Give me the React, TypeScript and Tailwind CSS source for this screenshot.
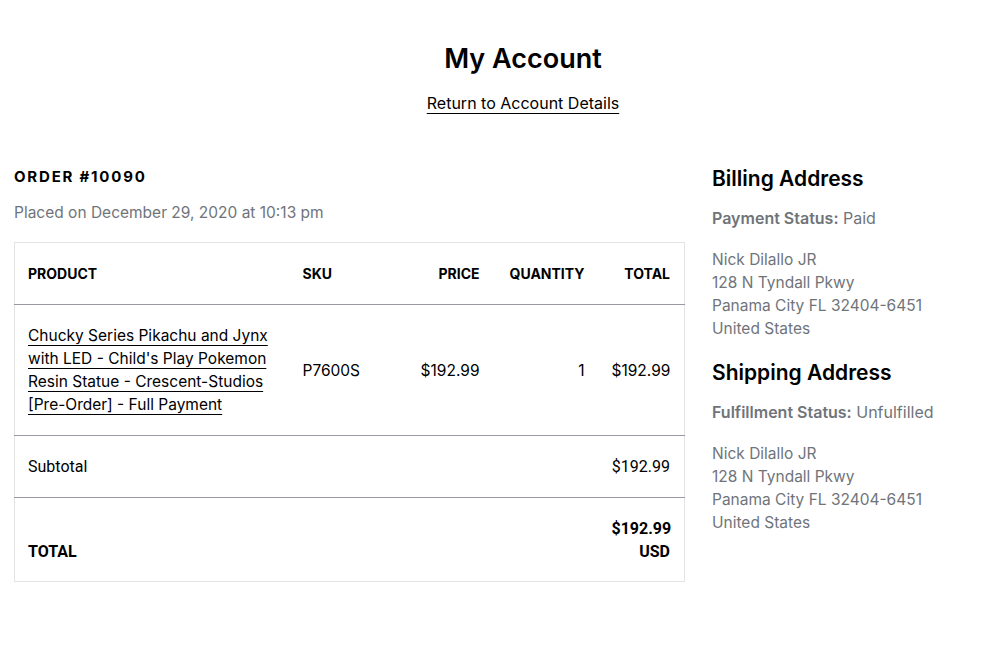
const font = { fontFamily: "Inter, 'Open Sans', sans-serif" };

const lines = ["Nick Dilallo JR", "128 N Tyndall Pkwy", "Panama City FL 32404-6451", "United States"];

function AddressBlock({ title, label, value }: { title: string; label: string; value: string }) {
  return (
    <div>
      <h2 className="text-[21px] font-semibold leading-[24px] text-black">{title}</h2>
      <p className="mt-[16px] text-[16px] leading-[22px] text-[#6f747a]">
        <span className="font-semibold">{label}</span> {value}
      </p>
      <div className="mt-[19px] text-[15.5px] leading-[23px] text-[#6f747a]">
        {lines.map((line) => (
          <div key={line}>{line}</div>
        ))}
      </div>
    </div>
  );
}

export default function App() {
  return (
    <div className="min-h-[648px] bg-white text-black" style={font}>
      <div className="pl-[46px] pt-[42px] text-center">
        <h1 className="text-[27px] font-semibold leading-[34px]">My Account</h1>
        <a href="#" className="mt-[16px] inline-block text-[16px] leading-[22px] underline underline-offset-[4px]">
          Return to Account Details
        </a>
      </div>

      <div className="mt-[52px] flex gap-[28px] px-[14px]">
        <div className="w-[670px] shrink-0">
          <h2 className="-mt-[1px] text-[15px] font-bold leading-[22px] tracking-[0.12em]">ORDER #10090</h2>
          <p className="mt-[14px] text-[15.5px] leading-[22px] text-[#6f747a]">
            Placed on December 29, 2020 at 10:13 pm
          </p>
          <table className="mt-[18px] w-full table-fixed border border-[#e4e4e4] text-[15.5px] leading-[23px]">
            <colgroup>
              <col className="w-[275px]" />
              <col className="w-[100px]" />
              <col className="w-[103px]" />
              <col className="w-[105px]" />
              <col className="w-[87px]" />
            </colgroup>
            <thead>
              <tr className="border-b border-[#979aa0] text-[14px] font-bold">
                <th className="px-[13px] py-[19px] text-left">PRODUCT</th>
                <th className="px-[13px] py-[19px] text-left">SKU</th>
                <th className="px-[13px] py-[19px] text-right">PRICE</th>
                <th className="px-[13px] py-[19px] text-right">QUANTITY</th>
                <th className="px-[14px] py-[19px] text-right">TOTAL</th>
              </tr>
            </thead>
            <tbody>
              <tr className="border-b border-[#979aa0]">
                <td className="px-[13px] py-[19px]">
                  <a href="#" className="underline underline-offset-[4px]">
                    Chucky Series Pikachu and Jynx with LED - Child's Play Pokemon Resin Statue - Crescent-Studios [Pre-Order] - Full Payment
                  </a>
                </td>
                <td className="px-[13px] py-[19px]">P7600S</td>
                <td className="px-[13px] py-[19px] text-right">$192.99</td>
                <td className="px-[13px] py-[19px] text-right">1</td>
                <td className="px-[14px] py-[19px] text-right">$192.99</td>
              </tr>
            </tbody>
            <tfoot className="text-[16px]" style={{ fontFamily: "Roboto, 'Liberation Sans', sans-serif" }}>
              <tr className="border-b border-[#979aa0]">
                <td colSpan={4} className="px-[13px] py-[19px]">Subtotal</td>
                <td className="px-[14px] py-[19px] text-right">$192.99</td>
              </tr>
              <tr className="font-bold">
                <td colSpan={4} className="px-[13px] pb-[18px] pt-[19px] align-bottom">TOTAL</td>
                <td className="px-[14px] pb-[18px] pt-[19px] text-right">
                  $192.99
                  <br />
                  USD
                </td>
              </tr>
            </tfoot>
          </table>
        </div>

        <div className="flex flex-1 flex-col gap-[21px]">
          <AddressBlock title="Billing Address" label="Payment Status:" value="Paid" />
          <AddressBlock title="Shipping Address" label="Fulfillment Status:" value="Unfulfilled" />
        </div>
      </div>
    </div>
  );
}
